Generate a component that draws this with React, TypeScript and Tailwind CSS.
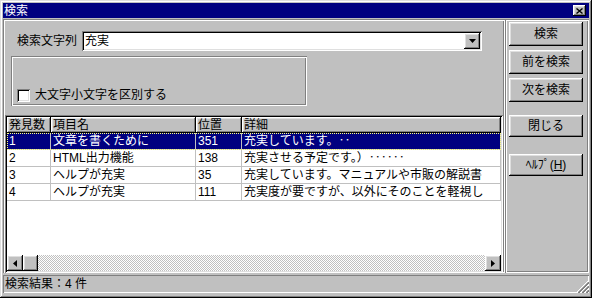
import React from "react";

const font = "font-['Liberation_Sans','Noto_Sans_CJK_JP',sans-serif]";
const raised =
  "shadow-[inset_-1px_-1px_#000,inset_1px_1px_#fff,inset_-2px_-2px_#808080,inset_2px_2px_#dfdfdf]";
const sunken =
  "shadow-[inset_1px_1px_#808080,inset_-1px_-1px_#fff,inset_2px_2px_#000,inset_-2px_-2px_#dfdfdf]";
const etched =
  "shadow-[inset_1px_1px_#808080,inset_-1px_-1px_#fff,inset_2px_2px_#fff,inset_-2px_-2px_#808080]";

const rows = [
  ["1", "文章を書くために", "351", "充実しています。‥"],
  ["2", "HTML出力機能", "138", "充実させる予定です。）‥‥‥"],
  ["3", "ヘルプが充実", "35", "充実しています。マニュアルや市販の解説書"],
  ["4", "ヘルプが充実", "111", "充実度が要ですが、以外にそのことを軽視し"],
];

function Btn({ children, h }: { children: React.ReactNode; h: string }) {
  return (
    <div
      className={`w-[74px] ${h} bg-[#c0c0c0] ${raised} flex items-center justify-center text-[12px] leading-[14px] text-black`}
    >
      {children}
    </div>
  );
}

export default function App() {
  return (
    <div
      className={`${font} relative w-[592px] h-[298px] bg-[#c0c0c0] shadow-[inset_-1px_-1px_#000,inset_1px_1px_#dfdfdf,inset_-2px_-2px_#808080,inset_2px_2px_#fff] p-[3px] pb-[5px] flex flex-col text-black text-[12px] leading-[14px]`}
    >
      {/* Title bar */}
      <div className="h-[15px] bg-[#000080] flex items-center justify-between pl-[1px] pr-[3px]">
        <span className="text-white text-[12px] leading-[14px]">検索</span>
        <div className={`w-[13px] h-[11px] bg-[#c0c0c0] ${raised} flex items-center justify-center`}>
          <svg width="7" height="6" viewBox="0 0 7 6">
            <path d="M0.5 0.5 L6.5 5.5 M6.5 0.5 L0.5 5.5" stroke="#000" strokeWidth="1.4" fill="none" />
          </svg>
        </div>
      </div>

      {/* Main area */}
      <div className="flex-1 flex mt-[1px]">
        {/* Left panel */}
        <div className={`w-[502px] flex flex-col ${etched}`}>
          <div className="h-[96px] flex flex-col">
            <div className="flex items-center mt-[12px] ml-[14px]">
              <span className="w-[65px]">検索文字列</span>
              <div className={`w-[400px] h-[20px] bg-white ${sunken} flex items-center justify-between pl-[3px] pr-[2px]`}>
                <span>充実</span>
                <div className={`w-[16px] h-[16px] bg-[#c0c0c0] ${raised} flex items-center justify-center`}>
                  <svg width="7" height="4" viewBox="0 0 7 4">
                    <polygon points="0,0 7,0 3.5,4" fill="#000" />
                  </svg>
                </div>
              </div>
            </div>
            <div className={`mt-[5px] ml-[8px] w-[296px] h-[50px] ${etched} flex items-end pb-[4px] pl-[6px]`}>
              <div className="flex items-center gap-[5px]">
                <div className={`w-[13px] h-[13px] bg-white ${sunken}`} />
                <span>大文字小文字を区別する</span>
              </div>
            </div>
          </div>

          {/* List */}
          <div className={`mx-[2px] h-[158px] bg-white ${sunken} p-[2px] flex flex-col`}>
            <div className="h-[16px] flex bg-[#c0c0c0]">
              {[
                ["発見数", "w-[44px]"],
                ["項目名", "w-[145px]"],
                ["位置", "w-[46px]"],
                ["詳細", "w-[259px]"],
              ].map(([t, w]) => (
                <div
                  key={t}
                  className={`${w} h-[16px] ${raised} pl-[2px] flex items-center`}
                >
                  {t}
                </div>
              ))}
            </div>
            {rows.map((r, i) => {
              const sel = i === 0;
              return (
                <div
                  key={i}
                  className={`h-[17px] flex border-b border-[#c0c0c0] ${
                    sel
                      ? "bg-[#000080] text-white outline outline-1 outline-dotted outline-[#ffff80] -outline-offset-1"
                      : ""
                  }`}
                >
                  <div className="w-[44px] border-r border-[#c0c0c0] pl-[2px] flex items-center">{r[0]}</div>
                  <div className="w-[145px] border-r border-[#c0c0c0] pl-[2px] flex items-center">{r[1]}</div>
                  <div className="w-[46px] border-r border-[#c0c0c0] pl-[2px] flex items-center">{r[2]}</div>
                  <div className="w-[259px] border-r border-[#c0c0c0] pl-[2px] flex items-center whitespace-nowrap overflow-hidden">
                    {r[3]}
                  </div>
                </div>
              );
            })}
            <div className="flex-1" />
            <div className="h-[16px] flex">
              <div className={`w-[16px] h-[16px] bg-[#c0c0c0] ${raised} flex items-center justify-center`}>
                <svg width="4" height="7" viewBox="0 0 4 7">
                  <polygon points="4,0 4,7 0,3.5" fill="#000" />
                </svg>
              </div>
              <div className={`w-[15px] h-[16px] bg-[#c0c0c0] ${raised}`} />
              <div className="flex-1 h-[16px] bg-[repeating-conic-gradient(#c0c0c0_0%_25%,#ffffff_0%_50%)] bg-[length:2px_2px]" />
              <div className={`w-[16px] h-[16px] bg-[#c0c0c0] ${raised} flex items-center justify-center`}>
                <svg width="4" height="7" viewBox="0 0 4 7">
                  <polygon points="0,0 0,7 4,3.5" fill="#000" />
                </svg>
              </div>
            </div>
          </div>
        </div>

        {/* Right panel */}
        <div className={`flex-1 ${etched} flex flex-col pl-[4px] pt-[3px]`}>
          <Btn h="h-[24px]">検索</Btn>
          <div className="mt-[4px]">
            <Btn h="h-[24px]">前を検索</Btn>
          </div>
          <div className="mt-[4px]">
            <Btn h="h-[24px]">次を検索</Btn>
          </div>
          <div className="mt-[13px]">
            <Btn h="h-[22px]">閉じる</Btn>
          </div>
          <div className="mt-[17px]">
            <Btn h="h-[22px]">
              <span>
                ﾍﾙﾌﾟ(<span className="underline">H</span>)
              </span>
            </Btn>
          </div>
        </div>
      </div>

      {/* Status bar */}
      <div className="mt-[2px] h-[18px] shadow-[inset_1px_1px_#808080,inset_-1px_-1px_#fff] flex items-center pl-[2px]">
        <span>検索結果：4 件</span>
      </div>

      {/* Size grip */}
      <svg className="absolute right-[3px] bottom-[5px]" width="12" height="12" viewBox="0 0 12 12">
        <path d="M11 0 L0 11" stroke="#fff" strokeWidth="1" />
        <path d="M12 1 L1 12 M12 2 L2 12" stroke="#808080" strokeWidth="1" />
        <path d="M11 4 L4 11" stroke="#fff" strokeWidth="1" />
        <path d="M12 5 L5 12 M12 6 L6 12" stroke="#808080" strokeWidth="1" />
        <path d="M11 8 L8 11" stroke="#fff" strokeWidth="1" />
        <path d="M12 9 L9 12 M12 10 L10 12" stroke="#808080" strokeWidth="1" />
      </svg>
    </div>
  );
}
